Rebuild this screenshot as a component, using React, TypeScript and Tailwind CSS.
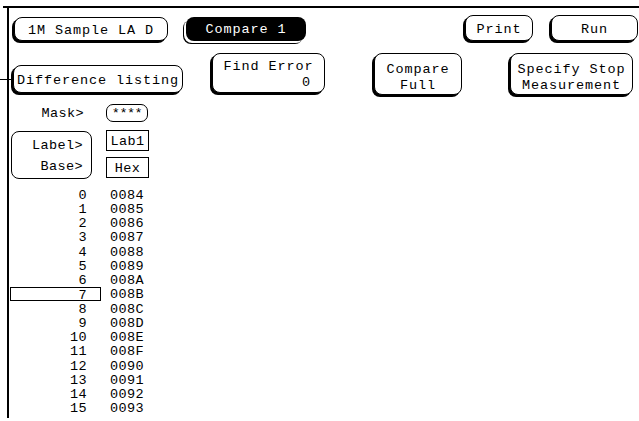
import React from "react"

const hexRows = [
  "0084", "0085", "0086", "0087", "0088", "0089", "008A", "008B",
  "008C", "008D", "008E", "008F", "0090", "0091", "0092", "0093",
]

function Btn({
  className,
  children,
}: {
  className: string
  children: React.ReactNode
}) {
  return (
    <div
      className={`flex flex-col items-center justify-center shrink-0 whitespace-nowrap rounded-[8px] border border-black bg-white shadow-[-2px_2px_0_0_#000] leading-[16px] ${className}`}
    >
      {children}
    </div>
  )
}

export default function App() {
  return (
    <div className="w-[639px] h-[421px] bg-white overflow-hidden text-black font-['Liberation_Mono',monospace] text-[13.5px] tracking-[0.9px]">
      <div className="ml-[3px] mt-[6px] h-[2px] bg-black" />
      <div className="ml-[7px] h-[410px] border-l-2 border-black flex flex-col">
        {/* top row */}
        <div className="flex items-start mt-[7px] h-[26px]">
          <Btn className="ml-[5px] mt-[2px] w-[154px] h-[24px] pt-[3px]">1M Sample LA D</Btn>
          <div className="ml-[18px] mt-[2px] w-[120px] h-[24px] pt-[3px] shrink-0 rounded-[8px] bg-black text-white flex items-center justify-center shadow-[-2px_2px_0_0_#fff,-3px_3px_0_0_#000]">
            Compare 1
          </div>
          <Btn className="ml-auto w-[68px] h-[26px] pt-[3px]">Print</Btn>
          <Btn className="ml-[18px] mr-[1px] w-[87px] h-[26px] pt-[3px]">Run</Btn>
        </div>

        {/* second row */}
        <div className="flex items-start mt-[12px] h-[42px]">
          <div className="relative ml-[4px] mt-[12px]">
            <div className="absolute left-[-13px] top-[14px] w-[13px] h-px bg-black" />
            <Btn className="w-[170px] h-[28px] pt-[3px]">Difference listing</Btn>
          </div>
          <Btn className="ml-[29px] w-[113px] h-[40px] !items-stretch px-[8px] pt-[4px]">
            <span className="text-center">Find Error</span>
            <span className="text-right pr-[5px]">0</span>
          </Btn>
          <Btn className="ml-[49px] w-[88px] h-[42px] pt-[7px]">
            <span>Compare</span>
            <span>Full</span>
          </Btn>
          <Btn className="ml-[48px] w-[123px] h-[42px] pt-[7px]">
            <span>Specify Stop</span>
            <span>Measurement</span>
          </Btn>
        </div>

        {/* mask */}
        <div className="flex items-center mt-[9px] h-[18px]">
          <div className="w-[75px] pt-[3px] text-right tracking-[0.4px]">Mask&gt;</div>
          <div className="ml-[22px] w-[42px] h-[18px] pt-[3px] rounded-[7px] border border-black flex items-center justify-center tracking-[-0.5px]">
            ****
          </div>
        </div>

        {/* label / base */}
        <div className="flex mt-[8px] h-[49px]">
          <div className="ml-[2px] mt-[1px] w-[81px] h-[48px] rounded-[8px] border border-black flex flex-col justify-around items-end pr-[8px] pt-[4px] tracking-[0.4px]">
            <span>Label&gt;</span>
            <span>Base&gt;</span>
          </div>
          <div className="ml-[14px] flex flex-col">
            <div className="w-[43px] h-[21px] pt-[3px] border border-black flex items-center justify-center tracking-[0.4px]">
              Lab1
            </div>
            <div className="mt-[6px] w-[43px] h-[21px] pt-[3px] border border-black flex items-center justify-center tracking-[0.4px]">
              Hex
            </div>
          </div>
        </div>

        {/* listing */}
        <div className="flex flex-col mt-[8px] tracking-[0.4px]">
          {hexRows.map((h, i) => (
            <div key={i} className="flex h-[14.25px] leading-[14.25px]">
              <div
                className={`ml-[1px] w-[91px] pr-[14px] text-right ${
                  i === 7 ? "shadow-[inset_0_0_0_1px_#000] leading-[13px] pt-[2px]" : "pt-[1.5px]"
                }`}
              >
                {i}
              </div>
              <div className="ml-[9px] pt-[1.5px]">{h}</div>
            </div>
          ))}
        </div>
      </div>
    </div>
  )
}
